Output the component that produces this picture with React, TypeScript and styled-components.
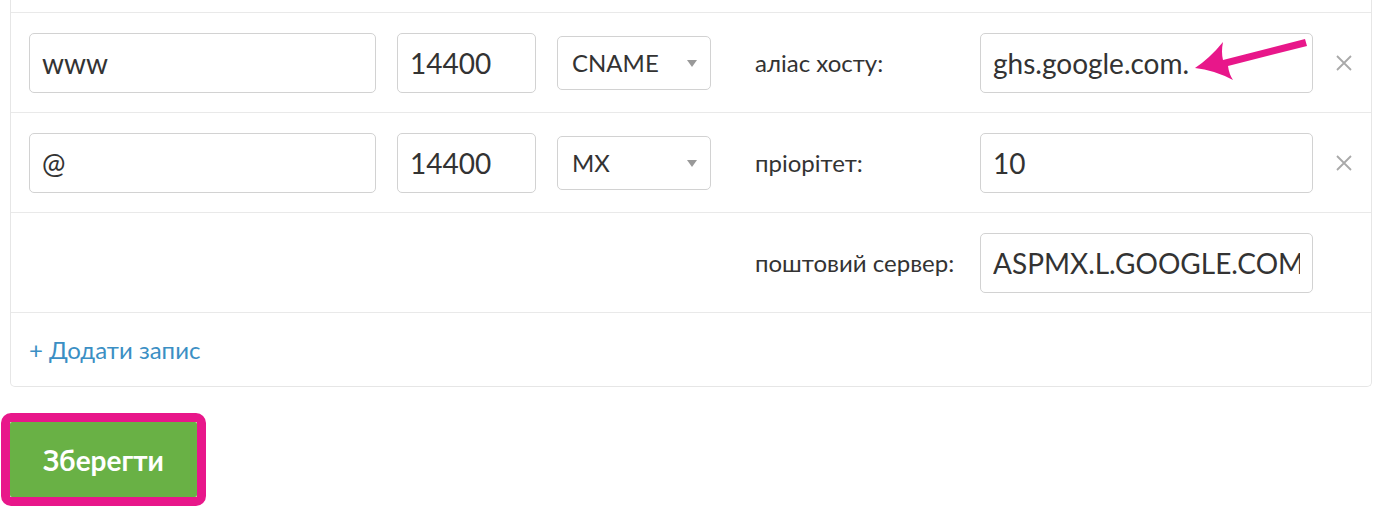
import React from "react";
import styled, { createGlobalStyle } from "styled-components";

const GlobalStyle = createGlobalStyle`
  html, body {
    margin: 0;
    padding: 0;
    background: #fff;
  }
  body {
    font-family: Lato, "Open Sans", "Liberation Sans", sans-serif;
    color: #333;
  }
`;

type Field = {
  label: string;
  value: string;
  arrow?: boolean;
};

type DnsRecord = {
  name: string;
  ttl: string;
  type: string;
  fields: Field[];
};

const records: DnsRecord[] = [
  {
    name: "www",
    ttl: "14400",
    type: "CNAME",
    fields: [{ label: "аліас хосту:", value: "ghs.google.com.", arrow: true }],
  },
  {
    name: "@",
    ttl: "14400",
    type: "MX",
    fields: [
      { label: "пріорітет:", value: "10" },
      { label: "поштовий сервер:", value: "ASPMX.L.GOOGLE.COM" },
    ],
  },
];

function RemoveIcon() {
  return (
    <svg width="16" height="16" viewBox="0 0 16 16">
      <path d="M1 1 L15 15 M15 1 L1 15" stroke="#a9a9a9" strokeWidth="1.8" />
    </svg>
  );
}

// annotation arrow drawn over the value field
function PinkArrow() {
  return (
    <ArrowSvg width="122" height="52" viewBox="0 0 122 52">
      <path
        d="M5 34 Q20 24 33 8 Q31 18 33 26 L115 5 L117 12 L38 32 Q39 40 43 46 Q24 36 5 34 Z"
        fill="#e8178a"
      />
    </ArrowSvg>
  );
}

function RecordRows({ record }: { record: DnsRecord }) {
  return (
    <>
      {record.fields.map((f, i) => (
        <Row key={i}>
          {i === 0 ? (
            <>
              <TextInput defaultValue={record.name} />
              <TextInput defaultValue={record.ttl} />
              <SelectWrap>
                <TypeSelect defaultValue={record.type}>
                  <option>A</option>
                  <option>CNAME</option>
                  <option>MX</option>
                  <option>TXT</option>
                </TypeSelect>
              </SelectWrap>
            </>
          ) : null}
          <FieldLabel>{f.label}</FieldLabel>
          <ValueCell>
            <TextInput defaultValue={f.value} />
            {f.arrow && <PinkArrow />}
          </ValueCell>
          {i === 0 ? (
            <RemoveButton aria-label="remove">
              <RemoveIcon />
            </RemoveButton>
          ) : null}
        </Row>
      ))}
    </>
  );
}

export default function App() {
  return (
    <Page>
      <GlobalStyle />
      <Panel>
        {records.map((r, i) => (
          <RecordRows key={i} record={r} />
        ))}
        <AddRow>
          <AddLink href="#">+ Додати запис</AddLink>
        </AddRow>
      </Panel>
      <Footer>
        <Highlight>
          <SaveButton>Зберегти</SaveButton>
        </Highlight>
      </Footer>
    </Page>
  );
}

const Page = styled.div`
  padding: 0 10px;
`;

const Panel = styled.div`
  border: 1px solid #e6e6e6;
  border-top: none;
  border-radius: 0 0 5px 5px;
  padding-top: 12px;
`;

const Row = styled.div`
  display: grid;
  grid-template-columns: 347px 139px 154px 227px 333px 20px;
  column-gap: 21px;
  align-items: center;
  height: 99px;
  padding: 0 17px 0 18px;
  border-top: 1px solid #e9e9e9;
`;

const TextInput = styled.input`
  box-sizing: border-box;
  width: 100%;
  height: 60px;
  padding: 0 12px;
  border: 1.5px solid #d2d2d2;
  border-radius: 5px;
  font-family: Lato, "Open Sans", sans-serif;
  font-size: 28px;
  color: #333;
  background: #fff;
  outline: none;
`;

const SelectWrap = styled.div`
  position: relative;
  &::after {
    content: "";
    position: absolute;
    right: 14px;
    top: 24px;
    border-left: 5px solid transparent;
    border-right: 5px solid transparent;
    border-top: 7px solid #999;
    pointer-events: none;
  }
`;

const TypeSelect = styled.select`
  box-sizing: border-box;
  width: 100%;
  height: 54px;
  padding: 0 14px;
  border: 1.5px solid #d2d2d2;
  border-radius: 5px;
  appearance: none;
  background: #fff;
  font-family: Lato, "Open Sans", sans-serif;
  font-size: 24px;
  color: #333;
  outline: none;
`;

const FieldLabel = styled.div`
  grid-column: 4;
  padding-left: 23px;
  font-size: 24px;
  color: #333;
  white-space: nowrap;
`;

const ValueCell = styled.div`
  position: relative;
`;

const ArrowSvg = styled.svg`
  position: absolute;
  left: 210px;
  top: 1px;
  pointer-events: none;
`;

const RemoveButton = styled.button`
  display: flex;
  padding: 0;
  margin-left: 2px;
  border: none;
  background: none;
  cursor: pointer;
`;

const AddRow = styled.div`
  display: flex;
  align-items: center;
  height: 73px;
  padding-left: 18px;
  border-top: 1px solid #e9e9e9;
`;

const AddLink = styled.a`
  font-size: 24px;
  color: #3b8fc4;
  text-decoration: none;
`;

const Footer = styled.div`
  padding: 26px 0 0 0;
  margin-left: -9px;
`;

const Highlight = styled.div`
  display: inline-block;
  border: 9px solid #e8178a;
  border-radius: 10px;
`;

const SaveButton = styled.button`
  display: block;
  width: 187px;
  height: 75px;
  border: none;
  border-radius: 2px;
  background: #69b145;
  color: #fff;
  font-family: Lato, "Open Sans", sans-serif;
  font-weight: 700;
  font-size: 28px;
  cursor: pointer;
`;
